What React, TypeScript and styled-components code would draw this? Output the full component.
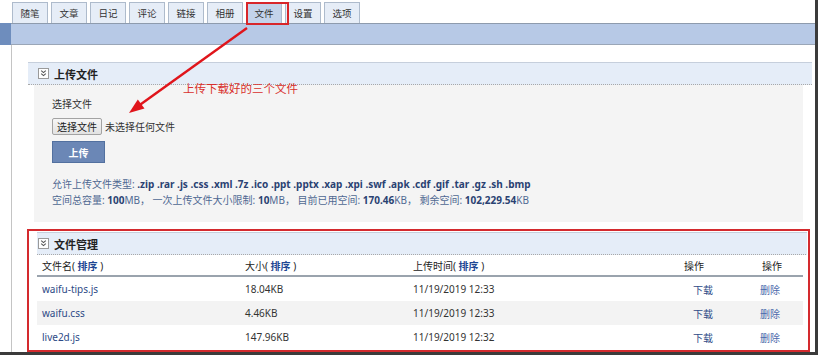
import React from 'react';
import styled, { createGlobalStyle } from 'styled-components';

const GlobalStyle = createGlobalStyle`
	body {
		margin: 0;
		background: #fff;
		font-family: 'Noto Sans', 'Noto Sans CJK SC', sans-serif;
		font-size: 10px;
		color: #333;
	}
`;

const tabs = ['随笔', '文章', '日记', '评论', '链接', '相册', '文件', '设置', '选项'];

const files = [
	{ name: 'waifu-tips.js', size: '18.04KB', time: '11/19/2019 12:33' },
	{ name: 'waifu.css', size: '4.46KB', time: '11/19/2019 12:33' },
	{ name: 'live2d.js', size: '147.96KB', time: '11/19/2019 12:32' },
];

function ToggleIcon() {
	return (
		<IconBox>
			<svg width="9" height="9" viewBox="0 0 9 9">
				<path d="M2.2 1.6 L4.5 3.6 L6.8 1.6 M2.2 4.6 L4.5 6.6 L6.8 4.6" fill="none" stroke="#555" strokeWidth="1.1" />
			</svg>
		</IconBox>
	);
}

function Sort({ label }: { label: string }) {
	return (
		<>
			{label}( <SortLink>排序</SortLink> )
		</>
	);
}

export default function App() {
	return (
		<>
			<GlobalStyle />
			<Frame>
				<TabBar>
					{tabs.map((t) => (
						<Tab key={t} $active={t === '文件'}>
							{t}
						</Tab>
					))}
				</TabBar>
				<NavBar>
					<NavEdge />
					<NavFill />
				</NavBar>
				<Body>
					<Section>
						<SectionHeader>
							<ToggleIcon />
							<SectionTitle>上传文件</SectionTitle>
						</SectionHeader>
						<UploadPanel>
							<FieldLabel>选择文件</FieldLabel>
							<FileRow>
								<FileButton>选择文件</FileButton>
								<span>未选择任何文件</span>
							</FileRow>
							<UploadButton>上传</UploadButton>
							<InfoLine $first>
								允许上传文件类型: <b>.zip .rar .js .css .xml .7z .ico .ppt .pptx .xap .xpi .swf .apk .cdf .gif .tar .gz .sh .bmp</b>
							</InfoLine>
							<InfoLine>
								空间总容量: <b>100</b>MB， 一次上传文件大小限制: <b>10</b>MB， 目前已用空间: <b>170.46</b>KB， 剩余空间: <b>102,229.54</b>KB
							</InfoLine>
						</UploadPanel>
					</Section>
					<Section $inset>
						<SectionHeader $inset>
							<ToggleIcon />
							<SectionTitle>文件管理</SectionTitle>
						</SectionHeader>
						<FileTable>
							<colgroup>
								<col style={{ width: 203 }} />
								<col style={{ width: 168 }} />
								<col style={{ width: 271 }} />
								<col style={{ width: 76 }} />
								<col style={{ width: 48 }} />
							</colgroup>
							<thead>
								<tr>
									<HeadCell><Sort label="文件名" /></HeadCell>
									<HeadCell><Sort label="大小" /></HeadCell>
									<HeadCell><Sort label="上传时间" /></HeadCell>
									<HeadCell>操作</HeadCell>
									<HeadCell $pad={7}>操作</HeadCell>
								</tr>
							</thead>
							<tbody>
								{files.map((f, i) => (
									<Row key={f.name} $alt={i % 2 === 1}>
										<Cell><FileLink>{f.name}</FileLink></Cell>
										<Cell>{f.size}</Cell>
										<Cell>{f.time}</Cell>
										<Cell $pad={14}><FileLink>下载</FileLink></Cell>
										<Cell><DeleteLink>删除</DeleteLink></Cell>
									</Row>
								))}
							</tbody>
						</FileTable>
					</Section>
				</Body>

				<Note>上传下载好的三个文件</Note>
				<TabMark />
				<FileMark />
				<Arrow width="815" height="352" viewBox="0 0 815 352">
					<line x1="247" y1="28" x2="139" y2="105.5" stroke="#e0151b" strokeWidth="2.4" />
					<polygon points="129,113 144.5,108.5 137.8,99.5" fill="#e0151b" />
				</Arrow>
			</Frame>
		</>
	);
}

const Frame = styled.div`
	position: relative;
	width: 815px;
	height: 352px;
	overflow: hidden;
	border-right: 3px solid #3b3b3b;
	border-bottom: 3px solid #3b3b3b;
`;

const TabBar = styled.div`
	display: flex;
	align-items: flex-end;
	gap: 3px;
	height: 23px;
	padding-left: 12px;
	box-sizing: border-box;
`;

const Tab = styled.div<{ $active?: boolean }>`
	width: 36px;
	height: 21px;
	box-sizing: border-box;
	display: flex;
	align-items: center;
	justify-content: center;
	border: 1px solid #aebbcc;
	border-bottom: none;
	background: ${(p) => (p.$active ? '#c3d3ea' : '#e6edf7')};
	color: #333;
	font-size: 9.5px;
`;

const NavBar = styled.div`
	display: flex;
	height: 22px;
`;

const NavEdge = styled.div`
	width: 11px;
	background: #6e8dbd;
`;

const NavFill = styled.div`
	flex: 1;
	background: #b7c9e6;
	border-top: 1px solid #8e9bad;
	border-bottom: 1px solid #9aa6b7;
`;

const Body = styled.div`
	margin-left: 11px;
	border-left: 1px solid #c4c4c4;
	padding: 17px 3px 10px 16px;
`;

const Section = styled.div<{ $inset?: boolean }>`
	margin-left: ${(p) => (p.$inset ? '9px' : '0')};
	margin-right: ${(p) => (p.$inset ? '2px' : '0')};
	margin-top: ${(p) => (p.$inset ? '10px' : '0')};
`;

const SectionHeader = styled.div<{ $inset?: boolean }>`
	display: flex;
	align-items: center;
	gap: 5px;
	height: 21px;
	padding-left: ${(p) => (p.$inset ? '1px' : '10px')};
	background: #e5edf8;
	border-top: 1px solid #c6cfdc;
	border-bottom: 1px dotted #a8a8a8;
`;

const IconBox = styled.span`
	width: 11px;
	height: 11px;
	box-sizing: border-box;
	border: 1px solid #9a9a9a;
	background: #fff;
	display: flex;
	align-items: center;
	justify-content: center;
`;

const SectionTitle = styled.span`
	font-size: 11px;
	font-weight: bold;
	color: #222;
`;

const UploadPanel = styled.div`
	margin: 0 9px 0 6px;
	background: #f4f4f4;
	padding: 12px 18px 14px;
	display: flex;
	flex-direction: column;
	align-items: flex-start;
`;

const FieldLabel = styled.div`
	line-height: 14px;
	color: #333;
`;

const FileRow = styled.div`
	display: flex;
	align-items: center;
	gap: 3px;
	margin-top: 7px;
	color: #333;
`;

const FileButton = styled.button`
	height: 17px;
	padding: 0 4px;
	font: inherit;
	font-size: 10px;
	color: #222;
	background: linear-gradient(#f6f6f6, #e2e2e2);
	border: 1px solid #a3a3a3;
	border-radius: 2px;
`;

const UploadButton = styled.button`
	margin-top: 6px;
	width: 53px;
	height: 22px;
	font: inherit;
	font-size: 10px;
	font-weight: bold;
	color: #fff;
	background: #6b87b6;
	border: 1px solid #52709f;
`;

const InfoLine = styled.div<{ $first?: boolean }>`
	line-height: 16px;
	color: #4f6892;
	margin-top: ${(p) => (p.$first ? '13px' : '0')};
	b {
		color: #2a4272;
	}
`;

const FileTable = styled.table`
	width: 766px;
	border-collapse: collapse;
	table-layout: fixed;
	border-bottom: 2px solid #8c9bbd;
`;

const HeadCell = styled.th<{ $pad?: number }>`
	height: 20px;
	padding: 0 0 0 ${(p) => p.$pad ?? 5}px;
	text-align: left;
	font-weight: normal;
	color: #222;
	border-bottom: 2px solid #9aa3ad;
	white-space: nowrap;
`;

const SortLink = styled.span`
	color: #1f4794;
	font-weight: bold;
`;

const Row = styled.tr<{ $alt?: boolean }>`
	background: ${(p) => (p.$alt ? '#f3f3f3' : '#fff')};
`;

const Cell = styled.td<{ $pad?: number }>`
	height: 24px;
	padding: 0 0 0 ${(p) => p.$pad ?? 5}px;
	color: #333;
	white-space: nowrap;
`;

const FileLink = styled.span`
	color: #2d4a86;
`;

const DeleteLink = styled.span`
	color: #4a69ab;
`;

const Note = styled.div`
	position: absolute;
	left: 183px;
	top: 81px;
	font-size: 11.5px;
	line-height: 16px;
	color: #d8302d;
`;

const TabMark = styled.div`
	position: absolute;
	left: 246px;
	top: 2px;
	width: 43px;
	height: 23px;
	box-sizing: border-box;
	border: 2px solid #d8262a;
`;

const FileMark = styled.div`
	position: absolute;
	left: 27px;
	top: 229px;
	width: 783px;
	height: 123px;
	box-sizing: border-box;
	border: 2px solid #d42a2e;
	box-shadow: inset 0 0 0 1px #fff;
`;

const Arrow = styled.svg`
	position: absolute;
	left: 0;
	top: 0;
	pointer-events: none;
`;
